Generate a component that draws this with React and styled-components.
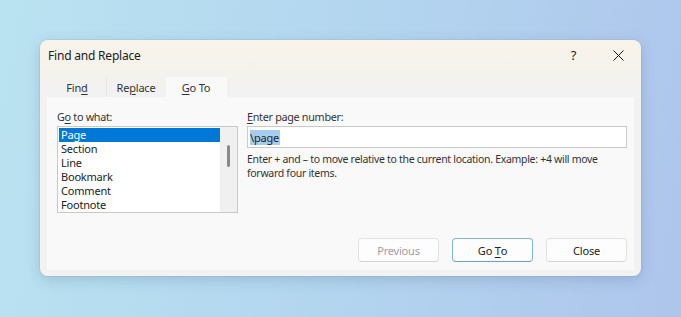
import React from 'react'
import styled, { createGlobalStyle } from 'styled-components'

const GlobalStyle = createGlobalStyle`
  html, body {
    margin: 0;
    padding: 0;
  }
  body {
    font-family: 'Noto Sans', 'Open Sans', sans-serif;
    color: #1f1f1f;
  }
`

const Page = styled.div`
  width: 681px;
  height: 317px;
  box-sizing: border-box;
  padding: 40px 40px 0 40px;
  background: linear-gradient(100deg, #bae3f1 0%, #b3d6ef 50%, #aec5ec 100%);
  overflow: hidden;
`

const Dialog = styled.div`
  width: 601px;
  height: 236px;
  border-radius: 8px;
  background: linear-gradient(180deg, #f8f4ea 0px, #f5f2ec 30px, #f2f2f2 50px, #f2f2f2 100%);
  box-shadow: 0 4px 14px rgba(60, 90, 120, 0.22), 0 0 0 1px rgba(120, 140, 160, 0.12);
  display: flex;
  flex-direction: column;
  overflow: hidden;
`

const TitleBar = styled.div`
  height: 37px;
  display: flex;
  align-items: center;
  padding: 0 0 0 8px;
`

const Title = styled.div`
  flex: 1;
  font-size: 12px;
  letter-spacing: -0.2px;
  color: #1a1a1a;
  margin-top: -7px;
`

const TitleButton = styled.div`
  width: 45px;
  height: 30px;
  display: flex;
  align-items: center;
  justify-content: center;
  font-size: 13px;
  color: #1a1a1a;
  margin-top: -7px;
`

const Tabs = styled.div`
  display: flex;
  padding-left: 8px;
  height: 20px;
`

const Tab = styled.div`
  width: ${p => (p.$active ? 61 : 59)}px;
  display: flex;
  align-items: center;
  justify-content: center;
  font-size: 11px;
  letter-spacing: -0.2px;
  color: #333;
  background: ${p => (p.$active ? '#f9f9f9' : 'transparent')};
  border-right: 1px solid ${p => (p.$sep ? '#e6e6e6' : 'transparent')};
  box-sizing: border-box;
`

const U = styled.span`
  text-decoration: underline;
  text-underline-offset: 2px;
  text-decoration-thickness: 1px;
`

const Panel = styled.div`
  flex: 1;
  margin: 0 7px 6px 7px;
  background: #f9f9f9;
  padding: 12px 7px 0 10px;
  display: flex;
  flex-direction: column;
`

const Columns = styled.div`
  display: flex;
  gap: 9px;
`

const Column = styled.div`
  display: flex;
  flex-direction: column;
  width: ${p => p.$w}px;
`

const Label = styled.div`
  font-size: 10.8px;
  letter-spacing: -0.3px;
  color: #333;
  height: 17px;
  line-height: 15px;
`

const ListBox = styled.div`
  height: 87px;
  border: 1px solid #c9c9c9;
  background: #fff;
  display: flex;
  box-sizing: border-box;
`

const Items = styled.div`
  flex: 1;
  padding: 1px 0 0 1px;
`

const Item = styled.div`
  height: 14px;
  line-height: 14px;
  font-size: 11px;
  letter-spacing: -0.2px;
  padding-left: 2px;
  color: ${p => (p.$selected ? '#fff' : '#222')};
  background: ${p => (p.$selected ? '#0078d7' : 'transparent')};
`

const ScrollTrack = styled.div`
  width: 17px;
  background: #f0f0f0;
  display: flex;
  justify-content: center;
  padding-top: 18px;
  box-sizing: border-box;
`

const Thumb = styled.div`
  width: 3px;
  height: 22px;
  border-radius: 2px;
  background: #8a8a8a;
`

const Input = styled.div`
  height: 22px;
  border: 1px solid #c9c9c9;
  background: #fff;
  box-sizing: border-box;
  display: flex;
  align-items: center;
  padding-left: 2px;
`

const Selection = styled.span`
  font-size: 11px;
  letter-spacing: -0.2px;
  color: #222;
  background: #a6cdef;
  line-height: 15px;
  padding-right: 1px;
`

const Help = styled.div`
  margin-top: 4px;
  font-size: 10.5px;
  letter-spacing: -0.3px;
  line-height: 14px;
  color: #333;
`

const Buttons = styled.div`
  display: flex;
  justify-content: flex-end;
  gap: 13px;
  margin-top: 25px;
`

const Button = styled.div`
  width: 81px;
  height: 24px;
  box-sizing: border-box;
  border-radius: 4px;
  background: #fdfdfd;
  border: 1px solid ${p => (p.$primary ? '#86b3dc' : '#e2e2e2')};
  border-bottom-color: ${p => (p.$primary ? '#6f9fcf' : '#d4d4d4')};
  display: flex;
  align-items: center;
  justify-content: center;
  font-size: 11px;
  letter-spacing: -0.2px;
  white-space: pre;
  color: ${p => (p.$disabled ? '#a0a0a0' : '#222')};
`

const items = ['Page', 'Section', 'Line', 'Bookmark', 'Comment', 'Footnote']

function CloseIcon() {
  return (
    <svg width="11" height="11" viewBox="0 0 11 11">
      <path d="M0.5 0.5 L10.5 10.5 M10.5 0.5 L0.5 10.5" stroke="#1a1a1a" strokeWidth="1" fill="none" />
    </svg>
  )
}

export default function App() {
  return (
    <React.Fragment>
      <GlobalStyle />
      <Page>
        <Dialog>
          <TitleBar>
            <Title>Find and Replace</Title>
            <TitleButton>?</TitleButton>
            <TitleButton>
              <CloseIcon />
            </TitleButton>
          </TitleBar>
          <Tabs>
            <Tab $sep>
              Fin<U>d</U>
            </Tab>
            <Tab>
              Re<U>p</U>lace
            </Tab>
            <Tab $active>
              <U>G</U>o To
            </Tab>
          </Tabs>
          <Panel>
            <Columns>
              <Column $w={181}>
                <Label>
                  G<U>o</U> to what:
                </Label>
                <ListBox>
                  <Items>
                    {items.map((name, i) => (
                      <Item key={name} $selected={i === 0}>
                        {name}
                      </Item>
                    ))}
                  </Items>
                  <ScrollTrack>
                    <Thumb />
                  </ScrollTrack>
                </ListBox>
              </Column>
              <Column $w={380}>
                <Label>
                  <U>E</U>nter page number:
                </Label>
                <Input>
                  <Selection>\page</Selection>
                </Input>
                <Help>
                  Enter + and – to move relative to the current location. Example: +4 will move forward four items.
                </Help>
              </Column>
            </Columns>
            <Buttons>
              <Button $disabled>Previous</Button>
              <Button $primary>
                {'Go '}
                <U>T</U>o
              </Button>
              <Button>Close</Button>
            </Buttons>
          </Panel>
        </Dialog>
      </Page>
    </React.Fragment>
  )
}
